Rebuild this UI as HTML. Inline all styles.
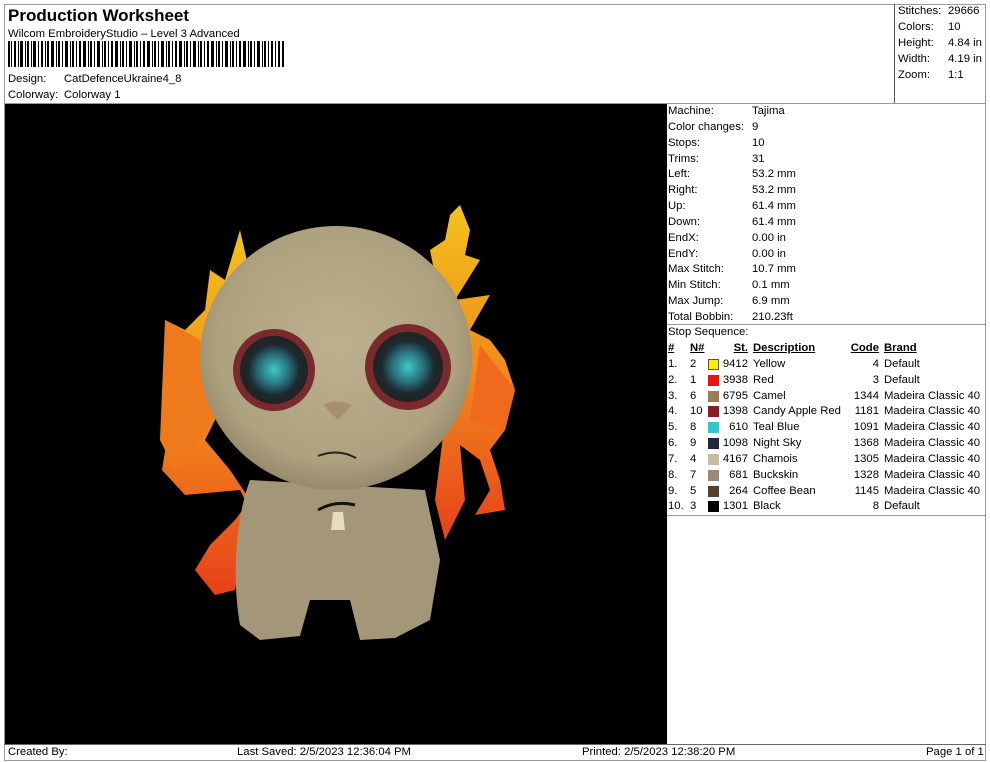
<!DOCTYPE html>
<html><head><meta charset="utf-8"><style>
*{margin:0;padding:0;box-sizing:border-box}
body{width:990px;height:762px;background:#fff;font-family:"Liberation Sans",Arial,sans-serif;font-size:11.3px;color:#000;position:relative;overflow:hidden}
.a{position:absolute;white-space:nowrap;line-height:14px}
.h{position:absolute;background:#999}
.r{text-align:right}
u{text-decoration:underline}
b{font-weight:bold}
</style></head><body>
<div class="h" style="left:4px;top:4px;width:982px;height:1px"></div>
<div class="h" style="left:4px;top:4px;width:1px;height:757px"></div>
<div class="h" style="left:985px;top:4px;width:1px;height:757px"></div>
<div class="h" style="left:4px;top:760px;width:982px;height:1px"></div>
<div class="h" style="left:894px;top:4px;width:1px;height:99px;background:#555"></div>
<div class="h" style="left:4px;top:103px;width:982px;height:1px"></div>

<div class="a" style="left:8px;top:6px;font-size:17px;font-weight:bold;line-height:20px">Production Worksheet</div>
<div class="a" style="left:8px;top:27px">Wilcom EmbroideryStudio – Level 3 Advanced</div>
<svg style="position:absolute;left:8px;top:41px" width="276" height="26">
<g fill="#000">
<rect x="0" width="2" height="26"/><rect x="3" width="1" height="26"/><rect x="6" width="2" height="26"/><rect x="10" width="1" height="26"/><rect x="12" width="3" height="26"/><rect x="17" width="1" height="26"/><rect x="19" width="2" height="26"/><rect x="23" width="1" height="26"/><rect x="25" width="3" height="26"/><rect x="30" width="1" height="26"/><rect x="33" width="2" height="26"/><rect x="37" width="1" height="26"/><rect x="39" width="2" height="26"/><rect x="43" width="3" height="26"/><rect x="48" width="1" height="26"/><rect x="50" width="2" height="26"/><rect x="54" width="1" height="26"/><rect x="57" width="3" height="26"/><rect x="62" width="1" height="26"/><rect x="64" width="2" height="26"/><rect x="68" width="1" height="26"/><rect x="71" width="2" height="26"/><rect x="75" width="3" height="26"/><rect x="80" width="1" height="26"/><rect x="82" width="2" height="26"/><rect x="86" width="1" height="26"/><rect x="89" width="3" height="26"/><rect x="94" width="1" height="26"/><rect x="96" width="2" height="26"/><rect x="100" width="1" height="26"/><rect x="103" width="2" height="26"/><rect x="107" width="3" height="26"/><rect x="112" width="1" height="26"/><rect x="114" width="2" height="26"/><rect x="118" width="1" height="26"/><rect x="121" width="3" height="26"/><rect x="126" width="1" height="26"/><rect x="128" width="2" height="26"/><rect x="132" width="1" height="26"/><rect x="135" width="2" height="26"/><rect x="139" width="3" height="26"/><rect x="144" width="1" height="26"/><rect x="146" width="2" height="26"/><rect x="150" width="1" height="26"/><rect x="153" width="3" height="26"/><rect x="158" width="1" height="26"/><rect x="160" width="2" height="26"/><rect x="164" width="1" height="26"/><rect x="167" width="2" height="26"/><rect x="171" width="3" height="26"/><rect x="176" width="1" height="26"/><rect x="178" width="2" height="26"/><rect x="182" width="1" height="26"/><rect x="185" width="3" height="26"/><rect x="190" width="1" height="26"/><rect x="192" width="2" height="26"/><rect x="196" width="1" height="26"/><rect x="199" width="2" height="26"/><rect x="203" width="3" height="26"/><rect x="208" width="1" height="26"/><rect x="210" width="2" height="26"/><rect x="214" width="1" height="26"/><rect x="217" width="3" height="26"/><rect x="222" width="1" height="26"/><rect x="224" width="2" height="26"/><rect x="228" width="1" height="26"/><rect x="231" width="2" height="26"/><rect x="235" width="3" height="26"/><rect x="240" width="1" height="26"/><rect x="242" width="2" height="26"/><rect x="246" width="1" height="26"/><rect x="249" width="3" height="26"/><rect x="254" width="1" height="26"/><rect x="256" width="2" height="26"/><rect x="260" width="1" height="26"/><rect x="263" width="2" height="26"/><rect x="267" width="1" height="26"/><rect x="270" width="2" height="26"/><rect x="274" width="2" height="26"/>
</g></svg>
<div class="a" style="left:8px;top:72px">Design:</div><div class="a" style="left:64px;top:72px">CatDefenceUkraine4_8</div>
<div class="a" style="left:8px;top:88px">Colorway:</div><div class="a" style="left:64px;top:88px">Colorway 1</div>

<div class="a" style="left:898px;top:4px">Stitches:</div><div class="a" style="left:948px;top:4px">29666</div>
<div class="a" style="left:898px;top:20px">Colors:</div><div class="a" style="left:948px;top:20px">10</div>
<div class="a" style="left:898px;top:36px">Height:</div><div class="a" style="left:948px;top:36px">4.84 in</div>
<div class="a" style="left:898px;top:52px">Width:</div><div class="a" style="left:948px;top:52px">4.19 in</div>
<div class="a" style="left:898px;top:68px">Zoom:</div><div class="a" style="left:948px;top:68px">1:1</div>

<svg style="position:absolute;left:5px;top:104px" width="661" height="640" viewBox="5 104 661 640">
<defs>
<linearGradient id="fl" x1="0" y1="0" x2="0" y2="1"><stop offset="0" stop-color="#f2c21c"/><stop offset=".5" stop-color="#f08a1c"/><stop offset="1" stop-color="#e8401a"/></linearGradient>
<radialGradient id="hd" cx=".5" cy=".45" r=".55"><stop offset="0" stop-color="#bcb08e"/><stop offset=".8" stop-color="#aea180"/><stop offset="1" stop-color="#968a6c"/></radialGradient>
<radialGradient id="ey" cx=".5" cy=".5" r=".5"><stop offset="0" stop-color="#3ec8c8"/><stop offset=".45" stop-color="#2a6f7a"/><stop offset=".75" stop-color="#1c2a30"/><stop offset="1" stop-color="#222"/></radialGradient>
</defs>
<rect x="5" y="104" width="661" height="640" fill="#000"/>
<path d="M240 230 L248 265 L265 250 L280 240 L300 235 L250 330 L230 370 L215 420 L205 440 L230 470 L250 500 L235 520 L210 545 L195 570 L215 595 L235 590 L240 560 L260 530 L240 490 L185 495 L162 470 L170 420 L165 320 L185 330 L205 310 L210 270 L225 280 Z" fill="url(#fl)"/>
<path d="M165 320 L200 340 L215 420 L175 470 L160 440 Z" fill="#ef7a1c"/>
<path d="M460 205 L470 230 L465 255 L480 260 L455 300 L490 295 L470 330 L490 340 L505 360 L515 390 L505 430 L490 450 L500 480 L505 510 L475 515 L490 490 L480 460 L460 445 L465 500 L445 540 L435 500 L445 420 L460 350 L440 300 L430 250 L445 240 L450 215 Z" fill="url(#fl)"/>
<path d="M480 345 L515 390 L505 430 L470 420 Z" fill="#ef6a1c"/>
<path d="M250 480 C235 520 232 580 240 625 L260 640 L300 636 L310 600 L350 600 L360 640 L395 638 L430 620 L440 560 L425 490 Z" fill="#a49679"/>
<ellipse cx="336" cy="358" rx="136" ry="132" fill="url(#hd)"/>
<circle cx="274" cy="370" r="41" fill="#7a2a2c"/>
<circle cx="274" cy="370" r="34" fill="url(#ey)"/>
<circle cx="408" cy="367" r="43" fill="#7a2a2c"/>
<circle cx="408" cy="367" r="35" fill="url(#ey)"/>
<path d="M323 405 Q338 398 352 405 L338 420 Z" fill="#a88f70"/>
<path d="M318 456 Q338 448 356 458" stroke="#222" stroke-width="2" fill="none"/>
<path d="M318 510 Q335 500 355 505" stroke="#111" stroke-width="3" fill="none"/>
<path d="M333 512 L343 512 L345 530 L331 530 Z" fill="#e6dcc0"/>
</svg>

<div style="position:absolute;left:666px;top:104px;width:1px;height:640px;background:#000"></div>
<div style="position:absolute;left:668px;top:104px">
<div class="a" style="left:0;top:0">Machine:</div><div class="a" style="left:84px;top:0">Tajima</div>
<div class="a" style="left:0;top:16px">Color changes:</div><div class="a" style="left:84px;top:16px">9</div>
<div class="a" style="left:0;top:32px">Stops:</div><div class="a" style="left:84px;top:32px">10</div>
<div class="a" style="left:0;top:48px">Trims:</div><div class="a" style="left:84px;top:48px">31</div>
<div class="a" style="left:0;top:63px">Left:</div><div class="a" style="left:84px;top:63px">53.2 mm</div>
<div class="a" style="left:0;top:79px">Right:</div><div class="a" style="left:84px;top:79px">53.2 mm</div>
<div class="a" style="left:0;top:95px">Up:</div><div class="a" style="left:84px;top:95px">61.4 mm</div>
<div class="a" style="left:0;top:111px">Down:</div><div class="a" style="left:84px;top:111px">61.4 mm</div>
<div class="a" style="left:0;top:127px">EndX:</div><div class="a" style="left:84px;top:127px">0.00 in</div>
<div class="a" style="left:0;top:143px">EndY:</div><div class="a" style="left:84px;top:143px">0.00 in</div>
<div class="a" style="left:0;top:158px">Max Stitch:</div><div class="a" style="left:84px;top:158px">10.7 mm</div>
<div class="a" style="left:0;top:174px">Min Stitch:</div><div class="a" style="left:84px;top:174px">0.1 mm</div>
<div class="a" style="left:0;top:190px">Max Jump:</div><div class="a" style="left:84px;top:190px">6.9 mm</div>
<div class="a" style="left:0;top:206px">Total Bobbin:</div><div class="a" style="left:84px;top:206px">210.23ft</div>
</div>
<div class="h" style="left:667px;top:324px;width:318px;height:1px"></div>
<div class="a" style="left:668px;top:325px">Stop Sequence:</div>
<div style="position:absolute;left:0;top:341px">
<div class="a" style="left:668px;top:0"><b><u>#</u></b></div>
<div class="a" style="left:690px;top:0"><b><u>N#</u></b></div>
<div class="a r" style="left:720px;width:28px;top:0"><b><u>St.</u></b></div>
<div class="a" style="left:753px;top:0"><b><u>Description</u></b></div>
<div class="a r" style="left:840px;width:39px;top:0"><b><u>Code</u></b></div>
<div class="a" style="left:884px;top:0"><b><u>Brand</u></b></div>
</div>
<div class="h" style="left:667px;top:515px;width:318px;height:1px"></div>

<div style="position:absolute;left:0;top:357px">
<div class="a" style="left:668px;top:0">1.</div><div class="a" style="left:690px;top:0">2</div><div style="position:absolute;left:708px;top:2px;width:11px;height:11px;background:#ffef00;border:1px solid #555"></div><div class="a r" style="left:718px;width:30px;top:0">9412</div><div class="a" style="left:753px;top:0">Yellow</div><div class="a r" style="left:840px;width:39px;top:0">4</div><div class="a" style="left:884px;top:0">Default</div>
<div class="a" style="left:668px;top:16px">2.</div><div class="a" style="left:690px;top:16px">1</div><div style="position:absolute;left:708px;top:18px;width:11px;height:11px;background:#f01010"></div><div class="a r" style="left:718px;width:30px;top:16px">3938</div><div class="a" style="left:753px;top:16px">Red</div><div class="a r" style="left:840px;width:39px;top:16px">3</div><div class="a" style="left:884px;top:16px">Default</div>
<div class="a" style="left:668px;top:32px">3.</div><div class="a" style="left:690px;top:32px">6</div><div style="position:absolute;left:708px;top:34px;width:11px;height:11px;background:#9c7c50"></div><div class="a r" style="left:718px;width:30px;top:32px">6795</div><div class="a" style="left:753px;top:32px">Camel</div><div class="a r" style="left:840px;width:39px;top:32px">1344</div><div class="a" style="left:884px;top:32px">Madeira Classic 40</div>
<div class="a" style="left:668px;top:47px">4.</div><div class="a" style="left:690px;top:47px">10</div><div style="position:absolute;left:708px;top:49px;width:11px;height:11px;background:#8a1a26"></div><div class="a r" style="left:718px;width:30px;top:47px">1398</div><div class="a" style="left:753px;top:47px">Candy Apple Red</div><div class="a r" style="left:840px;width:39px;top:47px">1181</div><div class="a" style="left:884px;top:47px">Madeira Classic 40</div>
<div class="a" style="left:668px;top:63px">5.</div><div class="a" style="left:690px;top:63px">8</div><div style="position:absolute;left:708px;top:65px;width:11px;height:11px;background:#30c8cc"></div><div class="a r" style="left:718px;width:30px;top:63px">610</div><div class="a" style="left:753px;top:63px">Teal Blue</div><div class="a r" style="left:840px;width:39px;top:63px">1091</div><div class="a" style="left:884px;top:63px">Madeira Classic 40</div>
<div class="a" style="left:668px;top:79px">6.</div><div class="a" style="left:690px;top:79px">9</div><div style="position:absolute;left:708px;top:81px;width:11px;height:11px;background:#1c2a40"></div><div class="a r" style="left:718px;width:30px;top:79px">1098</div><div class="a" style="left:753px;top:79px">Night Sky</div><div class="a r" style="left:840px;width:39px;top:79px">1368</div><div class="a" style="left:884px;top:79px">Madeira Classic 40</div>
<div class="a" style="left:668px;top:95px">7.</div><div class="a" style="left:690px;top:95px">4</div><div style="position:absolute;left:708px;top:97px;width:11px;height:11px;background:#c8bc9c"></div><div class="a r" style="left:718px;width:30px;top:95px">4167</div><div class="a" style="left:753px;top:95px">Chamois</div><div class="a r" style="left:840px;width:39px;top:95px">1305</div><div class="a" style="left:884px;top:95px">Madeira Classic 40</div>
<div class="a" style="left:668px;top:111px">8.</div><div class="a" style="left:690px;top:111px">7</div><div style="position:absolute;left:708px;top:113px;width:11px;height:11px;background:#9c8878"></div><div class="a r" style="left:718px;width:30px;top:111px">681</div><div class="a" style="left:753px;top:111px">Buckskin</div><div class="a r" style="left:840px;width:39px;top:111px">1328</div><div class="a" style="left:884px;top:111px">Madeira Classic 40</div>
<div class="a" style="left:668px;top:127px">9.</div><div class="a" style="left:690px;top:127px">5</div><div style="position:absolute;left:708px;top:129px;width:11px;height:11px;background:#5a3c2a"></div><div class="a r" style="left:718px;width:30px;top:127px">264</div><div class="a" style="left:753px;top:127px">Coffee Bean</div><div class="a r" style="left:840px;width:39px;top:127px">1145</div><div class="a" style="left:884px;top:127px">Madeira Classic 40</div>
<div class="a" style="left:668px;top:142px">10.</div><div class="a" style="left:690px;top:142px">3</div><div style="position:absolute;left:708px;top:144px;width:11px;height:11px;background:#000"></div><div class="a r" style="left:718px;width:30px;top:142px">1301</div><div class="a" style="left:753px;top:142px">Black</div><div class="a r" style="left:840px;width:39px;top:142px">8</div><div class="a" style="left:884px;top:142px">Default</div>
</div>

<div class="h" style="left:4px;top:744px;width:982px;height:1px;background:#666"></div>
<div class="a" style="left:8px;top:745px">Created By:</div>
<div class="a" style="left:237px;top:745px">Last Saved: 2/5/2023 12:36:04 PM</div>
<div class="a" style="left:582px;top:745px">Printed: 2/5/2023 12:38:20 PM</div>
<div class="a" style="left:926px;top:745px">Page 1 of 1</div>
</body></html>
